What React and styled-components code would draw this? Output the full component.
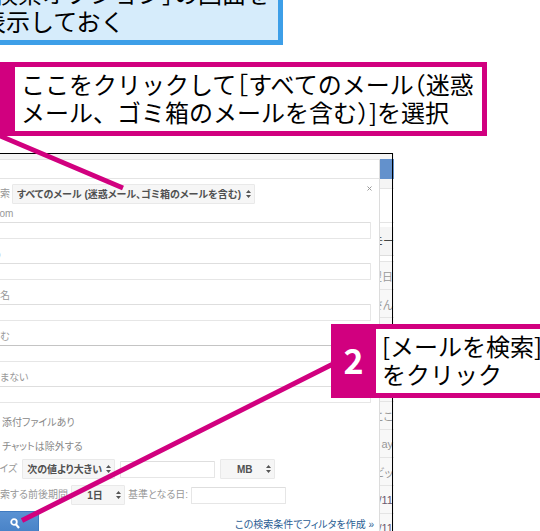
import React from "react";
import styled, { createGlobalStyle } from "styled-components";

const fields = ["From", "To", "件名", "含む", "含まない"];

const mails = ["翌日", "さん", "", "", "", "ここ", "ay", "ビッ", "/11", "/11"];

function Select({ label, width, align, children }) {
  return (
    <SelectBox $width={width} $align={align}>
      <select aria-label={label}>
        <option>{children}</option>
      </select>
      <svg width="5" height="8" viewBox="0 0 5 8" fill="#555">
        <path d="M0 3 L2.5 0 L5 3 Z M0 5 L2.5 8 L5 5 Z" />
      </svg>
    </SelectBox>
  );
}

function SearchForm() {
  return (
    <Form onSubmit={(e) => e.preventDefault()}>
      <SearchRow>
        <Label as="span">検索</Label>
        <Select label="検索" width={243}>
          すべてのメール (迷惑メール、ゴミ箱のメールを含む)
        </Select>
        <Close type="button" aria-label="閉じる">
          <svg width="5" height="5" viewBox="0 0 5 5" stroke="#999">
            <path d="M0.5 0.5 L4.5 4.5 M4.5 0.5 L0.5 4.5" />
          </svg>
        </Close>
      </SearchRow>

      {fields.map((name) => (
        <Field key={name}>
          <Label htmlFor={name}>{name}</Label>
          <TextInput id={name} type="text" $dark={name === "含む"} />
        </Field>
      ))}

      <Row>
        <Check>
          <input type="checkbox" />
          添付ファイルあり
        </Check>
      </Row>
      <Row>
        <Check>
          <input type="checkbox" />
          チャットは除外する
        </Check>
      </Row>
      <OptionRow $gap={5}>
        <Label htmlFor="size">サイズ</Label>
        <Select label="サイズの条件" width={93}>
          次の値より大きい
        </Select>
        <SmallInput id="size" type="text" />
        <Select label="単位" width={55} align="center">
          MB
        </Select>
      </OptionRow>
      <OptionRow $gap={3}>
        <Label as="span">検索する前後期間</Label>
        <Select label="検索する前後期間" width={54} align="center">
          1日
        </Select>
        <Label htmlFor="date">基準となる日:</Label>
        <SmallInput id="date" type="text" />
      </OptionRow>
      <Actions>
        <SearchButton type="submit" aria-label="メールを検索">
          <svg width="10" height="11" viewBox="0 0 10 11" fill="none">
            <circle cx="4" cy="4" r="2.8" stroke="#fff" strokeWidth="1.8" />
            <path d="M6 6.4 L9 10" stroke="#fff" strokeWidth="2.2" />
          </svg>
        </SearchButton>
        <a href="#filter">この検索条件でフィルタを作成 »</a>
      </Actions>
    </Form>
  );
}

export default function App() {
  return (
    <Page>
      <GlobalStyle />
      <Note>
        <Half>［</Half>検索オプション<Half>］</Half>の画面を
        <br />
        表示しておく
      </Note>
      <FirstStep>
        <Badge />
        <StepText>
          ここをクリックして<Half>［</Half>すべてのメール<Half>（</Half>迷惑
          <br />
          メール、ゴミ箱のメールを含む<Half>）</Half>]を選択
        </StepText>
      </FirstStep>

      <Frame>
        <Dialog>
          <DialogTop />
          <SearchForm />
        </Dialog>
        <MailList>
          <BlueBar />
          <Toolbar>モー</Toolbar>
          {mails.map((text, index) => (
            <Mail key={index} $dark={text === "/11"}>
              {text}
            </Mail>
          ))}
        </MailList>
      </Frame>

      <Pointers width="540" height="531" viewBox="0 0 540 531">
        <path d="M-2 135 L123 188 M334 363.5 L22 520.5" />
      </Pointers>

      <SecondStep>
        <Badge>2</Badge>
        <StepText>
          [メールを検索]
          <br />
          をクリック
        </StepText>
      </SecondStep>
    </Page>
  );
}

const GlobalStyle = createGlobalStyle`
  * {
    box-sizing: border-box;
  }

  body {
    margin: 0;
    background: #fff;
  }

  input, select, button {
    font-family: inherit;
  }
`;

const Page = styled.main`
  position: relative;
  height: 100vh;
  overflow: hidden;
  display: flow-root;
  font-family: "Liberation Sans", "Noto Sans CJK JP", sans-serif;
`;

const Half = styled.span`
  font-feature-settings: "halt";
`;

const Note = styled.p`
  width: fit-content;
  margin: -29px 0 0 -29px;
  padding: 3px 8px 5px 6px;
  border: 5px solid #3d9fe8;
  background: #d6ecfb;
  color: #000;
  font-family: "Noto Sans CJK JP", sans-serif;
  font-size: 24px;
  line-height: 28px;
  white-space: nowrap;
`;

const Step = styled.div`
  display: flex;
  width: fit-content;
  border: 5px solid #d1007f;
  background: #fff;
  font-family: "Noto Sans CJK JP", sans-serif;
  white-space: nowrap;
`;

const FirstStep = styled(Step)`
  margin: 17px 0 17px -30px;
`;

const SecondStep = styled(Step)`
  position: absolute;
  top: 324px;
  left: 331px;
`;

const Badge = styled.div`
  display: flex;
  align-items: center;
  justify-content: center;
  width: 40px;
  padding: 0 5px 2px 0;
  background: #d1007f;
  color: #fff;
  font-size: 34px;
  font-weight: bold;
  line-height: 34px;
`;

const StepText = styled.p`
  margin: 0;
  padding: 3px 8px 5px 6px;
  color: #000;
  font-size: 24px;
  line-height: 28px;
`;

const Frame = styled.section`
  position: relative;
  display: flex;
  width: calc(100% - 146px);
  padding-top: 6px;
  background: linear-gradient(#f5f5f5, #f5f5f5) 0 0 / 100% 6px no-repeat;

  &::after {
    content: "";
    position: absolute;
    inset: 0 1px 0 0;
    border: solid #000;
    border-width: 1px 1px 0 0;
    pointer-events: none;
  }
`;

const Dialog = styled.div`
  flex: 1;
  min-width: 0;
  border-top: 1px solid #e4e4e4;
  border-right: 1px solid #dcdcdc;
  background: #fff;
`;

const DialogTop = styled.div`
  height: 19px;
  border-bottom: 1px solid #e4e4e4;
`;

const Form = styled.form`
  margin-left: -10px;
  padding: 5px 8px 0 0;
  font-size: 10px;
  font-feature-settings: "palt";
`;

const Row = styled.div`
  display: flex;
  align-items: center;
  height: 20px;
  margin-bottom: 4px;
`;

const SearchRow = styled(Row)`
  gap: 2px;
  margin-bottom: 2px;
`;

const OptionRow = styled(Row)`
  gap: ${(props) => props.$gap}px;
  margin-bottom: 6px;
`;

const Actions = styled(Row)`
  justify-content: space-between;
  height: 24px;
  margin-right: -3px;

  a {
    color: #2a5d93;
    text-decoration: none;
    white-space: nowrap;
  }
`;

const Label = styled.label`
  color: #999;
  line-height: 16px;
  white-space: nowrap;
`;

const Field = styled.div`
  display: flex;
  flex-direction: column;
  margin-bottom: 8px;
`;

const TextInput = styled.input`
  height: 17px;
  padding: 0 4px;
  border: 1px solid #e6e6e6;
  border-top-color: ${(props) => (props.$dark ? "#c4c4c4" : "#dedede")};
  border-radius: 1px;
  background: #fff;
  font-size: 10px;
`;

const SmallInput = styled(TextInput)`
  width: 95px;
`;

const SelectBox = styled.span`
  position: relative;
  width: ${(props) => props.$width}px;
  height: 20px;

  select {
    width: 100%;
    height: 100%;
    padding: 0 ${(props) => (props.$align ? 10 : 0)}px 0 4px;
    appearance: none;
    border: 1px solid #e9e9e9;
    border-radius: 1px;
    background: #f6f6f6;
    color: #505050;
    font-size: 10px;
    font-weight: bold;
    font-feature-settings: "palt";
    text-align: ${(props) => props.$align || "left"};
    text-align-last: ${(props) => props.$align || "left"};
  }

  svg {
    position: absolute;
    top: 6px;
    right: 4px;
    pointer-events: none;
  }
`;

const Close = styled.button`
  display: flex;
  margin: -12px -1px 0 auto;
  padding: 0;
  border: 0;
  background: none;
`;

const Check = styled.label`
  display: flex;
  align-items: center;
  color: #888;

  input {
    width: 9px;
    height: 9px;
    margin: 0 3px 0 0;
  }
`;

const SearchButton = styled.button`
  display: flex;
  align-items: center;
  justify-content: center;
  width: 49px;
  height: 24px;
  padding: 0;
  border: 1px solid #3f7ac0;
  border-radius: 1px;
  background: linear-gradient(#5a92d3, #4781c6);
`;

const MailList = styled.div`
  width: 14px;
  overflow: hidden;
  color: #999;
  font-size: 11px;
  font-feature-settings: "palt";
  white-space: nowrap;
`;

const BlueBar = styled.div`
  height: 20px;
  background: #6391cc;
`;

const Toolbar = styled.div`
  display: flex;
  align-items: center;
  justify-content: flex-end;
  height: 82px;
  padding-top: 44px;
  border-bottom: 5px solid #fff;
  background: linear-gradient(
    #f5f5f5 9px,
    #e4e4e4 9px 10px,
    #fff 10px 43px,
    #e4e4e4 43px 44px,
    #fff 44px 48px,
    #f5f5f5 48px 76px,
    #ddd 76px
  );
  color: #444;
`;

const Mail = styled.div`
  display: flex;
  align-items: center;
  justify-content: flex-end;
  height: 28px;
  padding-right: 1px;
  border-top: 1px solid #e4e4e4;
  background: #f8f8f8;
  color: ${(props) => (props.$dark ? "#6b5a70" : "#999")};
`;

const Pointers = styled.svg`
  position: absolute;
  top: 0;
  left: 0;
  fill: none;
  stroke: #d1007f;
  stroke-width: 5;
  pointer-events: none;
`;
